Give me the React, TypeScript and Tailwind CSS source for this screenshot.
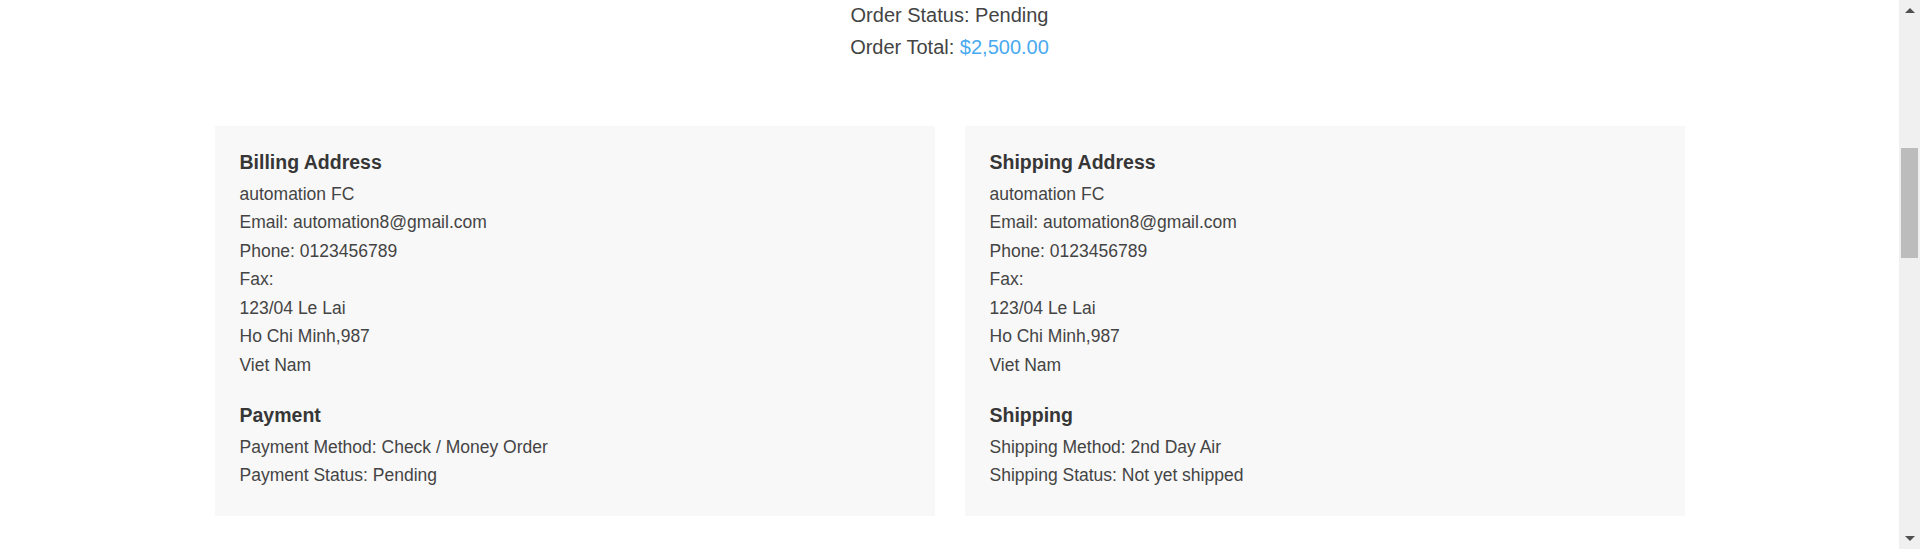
const billing = [
  'automation FC',
  'Email: automation8@gmail.com',
  'Phone: 0123456789',
  'Fax:',
  '123/04 Le Lai',
  'Ho Chi Minh,987',
  'Viet Nam',
];

type Section = { title: string; lines: string[] };

const left: Section[] = [
  { title: 'Billing Address', lines: billing },
  { title: 'Payment', lines: ['Payment Method: Check / Money Order', 'Payment Status: Pending'] },
];

const right: Section[] = [
  { title: 'Shipping Address', lines: billing },
  { title: 'Shipping', lines: ['Shipping Method: 2nd Day Air', 'Shipping Status: Not yet shipped'] },
];

function InfoBox({ sections }: { sections: Section[] }) {
  return (
    <div className="bg-[#f8f8f8] pl-[25px] pr-[25px] pt-[22px] pb-[26px] flex flex-col gap-[22px]">
      {sections.map((s) => (
        <div key={s.title}>
          <h3 className="text-[19.5px] leading-[28px] font-bold text-[#363636] mb-[3.5px]">{s.title}</h3>
          {s.lines.map((l, i) => (
            <div key={i} className="text-[17.5px] leading-[28.5px] text-[#444]">
              {l}
            </div>
          ))}
        </div>
      ))}
    </div>
  );
}

function Scrollbar() {
  return (
    <div className="w-[21px] h-[549px] bg-[#f0f0f0] flex flex-col items-center shrink-0">
      <div className="h-[17px] w-full flex items-center justify-center pt-[4px]">
        <div className="w-0 h-0 border-l-[5px] border-r-[5px] border-b-[5px] border-l-transparent border-r-transparent border-b-[#505050]" />
      </div>
      <div className="flex-1 w-full px-[2px] pt-[131px]">
        <div className="h-[110px] w-full bg-[#bcbcbc]" />
      </div>
      <div className="h-[17px] w-full flex items-center justify-center pb-[4px]">
        <div className="w-0 h-0 border-l-[5px] border-r-[5px] border-t-[5px] border-l-transparent border-r-transparent border-t-[#505050]" />
      </div>
    </div>
  );
}

export default function App() {
  return (
    <div className="flex h-[549px] overflow-hidden bg-white font-['Liberation_Sans',Arial,sans-serif]">
      <div className="flex-1">
        {/* order summary */}
        <div className="-mt-[1px] text-center text-[20px] leading-[32px] text-[#444]">
          <div>Order Status: Pending</div>
          <div>
            Order Total: <span className="text-[#4aaaf0]">$2,500.00</span>
          </div>
        </div>

        {/* addresses */}
        <div className="w-[1470px] mx-auto mt-[63px] grid grid-cols-2 gap-[30px]">
          <InfoBox sections={left} />
          <InfoBox sections={right} />
        </div>
      </div>
      <Scrollbar />
    </div>
  );
}
